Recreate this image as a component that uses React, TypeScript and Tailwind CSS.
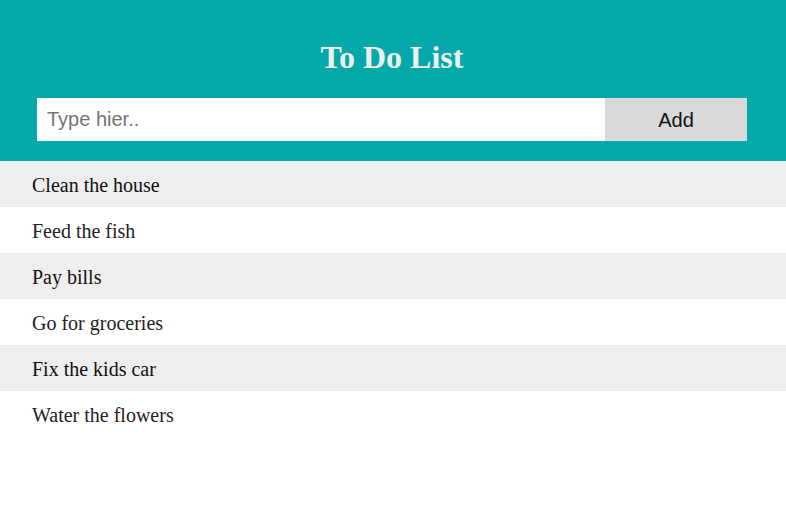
const todos = [
  'Clean the house',
  'Feed the fish',
  'Pay bills',
  'Go for groceries',
  'Fix the kids car',
  'Water the flowers',
];

const App = () => {
  return (
    <div className="min-h-screen bg-white font-['Liberation_Serif',serif]">
      <header className="bg-[#05a8a8] pb-[20px] pl-[37px] pr-[39px] pt-[39px]">
        <h2 className="text-center text-[32px] font-bold leading-[37px] text-[#eeeeee]">
          To Do List
        </h2>
        <div className="mt-[22px] flex h-[43px]">
          <input
            type="text"
            placeholder="Type hier.."
            className="h-full min-w-0 flex-1 bg-white px-[10px] font-['Liberation_Sans',Arial,sans-serif] text-[20px] text-black outline-none placeholder:text-[#757575]"
          />
          <button className="h-full w-[142px] bg-[#d9d9d9] font-['Liberation_Sans',Arial,sans-serif] text-[20px] text-[#111]">
            Add
          </button>
        </div>
      </header>
      <ul>
        {todos.map((todo, i) => (
          <li
            key={todo}
            className={
              i % 2 === 0
                ? 'bg-[#eeeeee] pb-[11px] pl-[32px] pr-[8px] pt-[13px] text-[20px] leading-[22px] text-[#111]'
                : 'bg-white pb-[11px] pl-[32px] pr-[8px] pt-[13px] text-[20px] leading-[22px] text-[#222]'
            }
          >
            {todo}
          </li>
        ))}
      </ul>
    </div>
  );
};

export default App;
